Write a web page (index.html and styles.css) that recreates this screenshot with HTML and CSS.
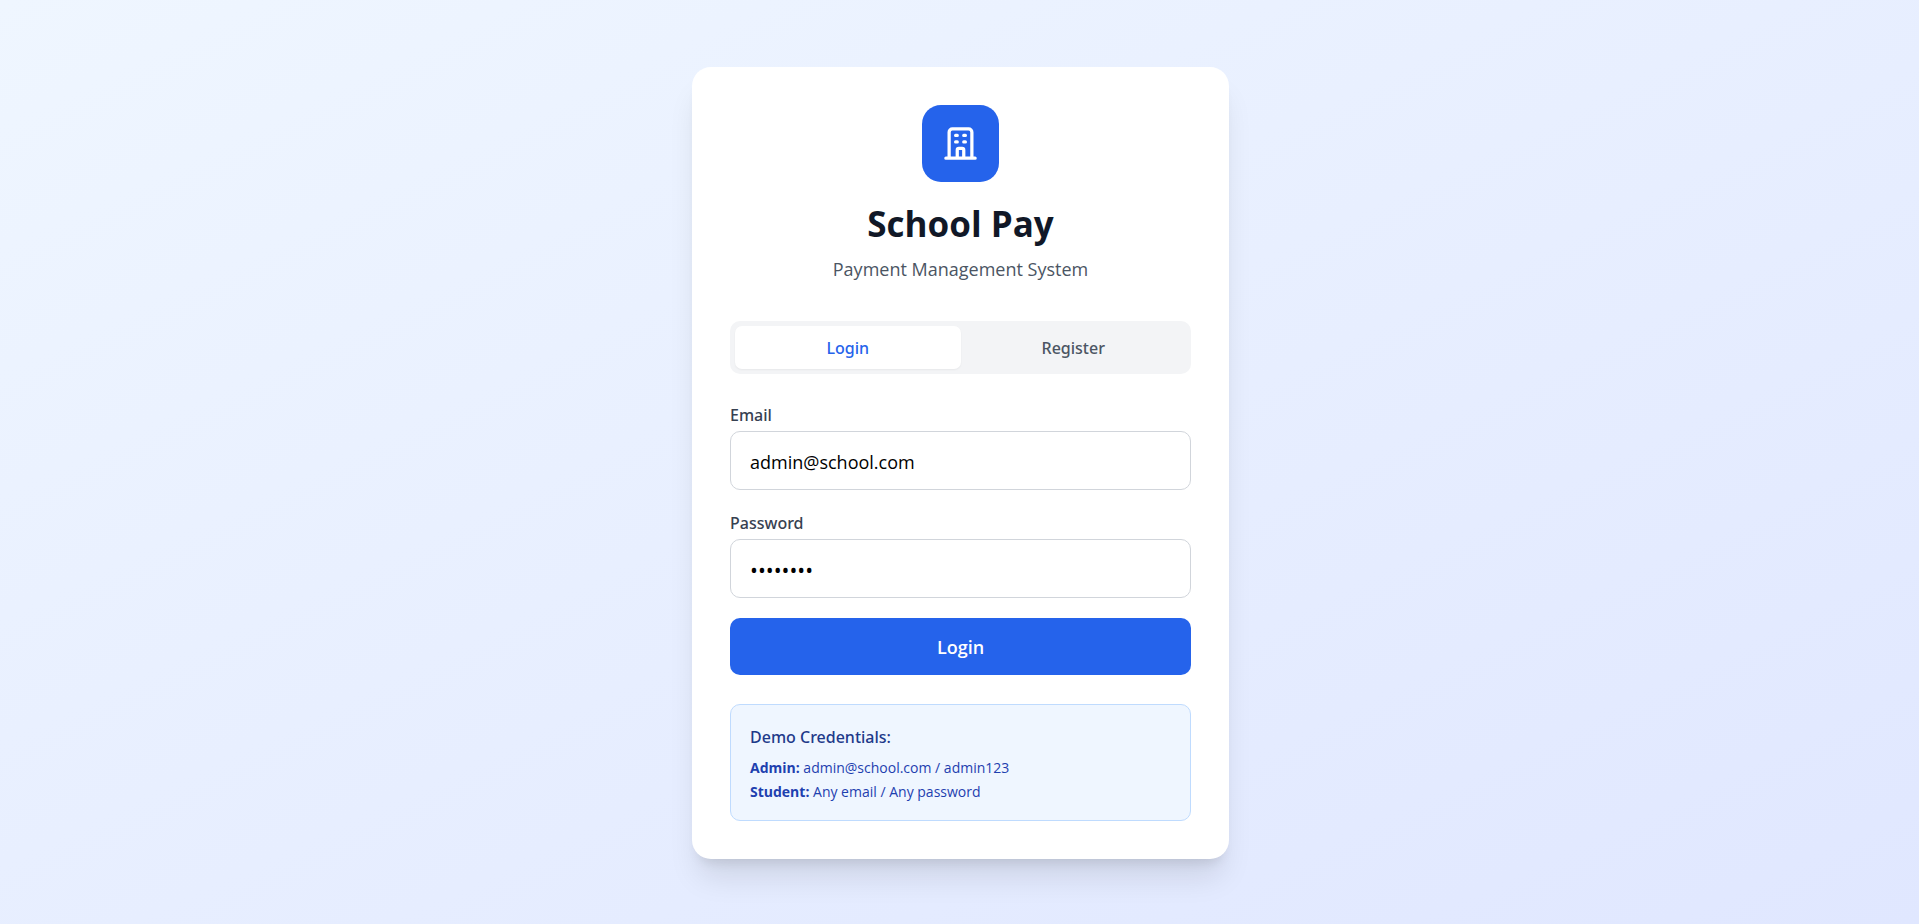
FILE: index.html
```html
<!DOCTYPE html>
<html lang="en">
<head>
<meta charset="utf-8">
<meta name="viewport" content="width=device-width, initial-scale=1">
<title>School Pay</title>
<link rel="stylesheet" href="styles.css">
</head>
<body>
<main class="page">
  <div class="card">
    <header class="brand">
      <div class="logo">
        <svg class="logo-icon" viewBox="0 0 24 24" fill="none" stroke="currentColor" stroke-width="2" stroke-linecap="round" stroke-linejoin="round" aria-hidden="true">
          <path d="M19 21V5a2 2 0 00-2-2H7a2 2 0 00-2 2v16m14 0h2m-2 0h-5m-9 0H3m2 0h5M9 7h1m-1 4h1m4-4h1m-1 4h1m-5 10v-5a1 1 0 011-1h2a1 1 0 011 1v5m-4 0h4"/>
        </svg>
      </div>
      <h1 class="title">School Pay</h1>
      <p class="subtitle">Payment Management System</p>
    </header>
    <div class="tabs">
      <button class="tab tab-active" type="button">Login</button>
      <button class="tab" type="button">Register</button>
    </div>
    <form class="form">
      <div class="field">
        <label class="label" for="email">Email</label>
        <input class="input" id="email" type="email" value="admin@school.com">
      </div>
      <div class="field">
        <label class="label" for="password">Password</label>
        <input class="input input-password" id="password" type="password" value="admin123">
      </div>
      <button class="submit" type="submit">Login</button>
    </form>
    <section class="demo">
      <h2 class="demo-title">Demo Credentials:</h2>
      <p class="demo-line"><strong>Admin:</strong> admin@school.com / admin123</p>
      <p class="demo-line"><strong>Student:</strong> Any email / Any password</p>
    </section>
  </div>
</main>
</body>
</html>
```
FILE: styles.css
```css
* {
  box-sizing: border-box;
  margin: 0;
}

body {
  font-family: "Open Sans", "Noto Sans", sans-serif;
  font-size: 18px;
  line-height: 29px;
}

button,
input {
  font: inherit;
}

.page {
  min-height: 100vh;
  display: flex;
  align-items: center;
  justify-content: center;
  padding: 20px 18px 19px 20px;
  background: linear-gradient(to bottom right, #eff6ff, #e0e7ff);
}

.card {
  width: 100%;
  max-width: 537px;
  padding: 38px;
  border-radius: 19px;
  background: #fff;
  box-shadow: 0 24px 30px -6px rgba(0, 0, 0, 0.1), 0 10px 12px -7px rgba(0, 0, 0, 0.1);
}

.brand {
  display: flex;
  flex-direction: column;
  align-items: center;
  margin-bottom: 37px;
  text-align: center;
}

.logo {
  display: flex;
  align-items: center;
  justify-content: center;
  width: 77px;
  height: 77px;
  margin-bottom: 20px;
  border-radius: 19px;
  background: #2563eb;
  color: #fff;
}

.logo-icon {
  width: 39px;
  height: 39px;
}

.title {
  margin-bottom: 10px;
  font-size: 35px;
  line-height: 43px;
  font-weight: 700;
  color: #111827;
}

.subtitle {
  color: #4b5563;
}

.tabs {
  display: flex;
  margin-bottom: 28px;
  padding: 5px;
  border-radius: 10px;
  background: #f3f4f6;
}

.tab {
  flex: 1;
  padding: 10px 19px 9px;
  border: 0;
  border-radius: 7px;
  background: transparent;
  font-family: "Noto Sans", sans-serif;
  font-size: 16px;
  line-height: 24px;
  font-weight: 500;
  color: #4b5563;
  cursor: pointer;
}

.tab-active {
  background: #fff;
  color: #2563eb;
  box-shadow: 0 1px 2px rgba(0, 0, 0, 0.05);
}

.form {
  display: flex;
  flex-direction: column;
  gap: 20px;
}

.field {
  display: flex;
  flex-direction: column;
  gap: 3px;
}

.label {
  font-family: "Noto Sans", sans-serif;
  font-size: 16px;
  line-height: 26px;
  font-weight: 500;
  color: #374151;
}

.input {
  width: 100%;
  height: 59px;
  padding: 16px 19px 12px;
  border: 1px solid #d1d5db;
  border-radius: 10px;
  background: #fff;
  color: #000;
}

.input-password {
  font-size: 21px;
}

.submit {
  padding: 15px 14px 13px;
  border: 0;
  border-radius: 10px;
  background: #2563eb;
  font-weight: 600;
  color: #fff;
  cursor: pointer;
}

.demo {
  display: flex;
  flex-direction: column;
  gap: 5px;
  margin-top: 29px;
  padding: 19px;
  border: 1px solid #bfdbfe;
  border-radius: 10px;
  background: #eff6ff;
}

.demo-title {
  margin-bottom: 3px;
  font-family: "Noto Sans", sans-serif;
  font-size: 16px;
  line-height: 26px;
  font-weight: 500;
  color: #1e3a8a;
}

.demo-line {
  font-size: 14px;
  line-height: 19px;
  color: #1e40af;
}
```
